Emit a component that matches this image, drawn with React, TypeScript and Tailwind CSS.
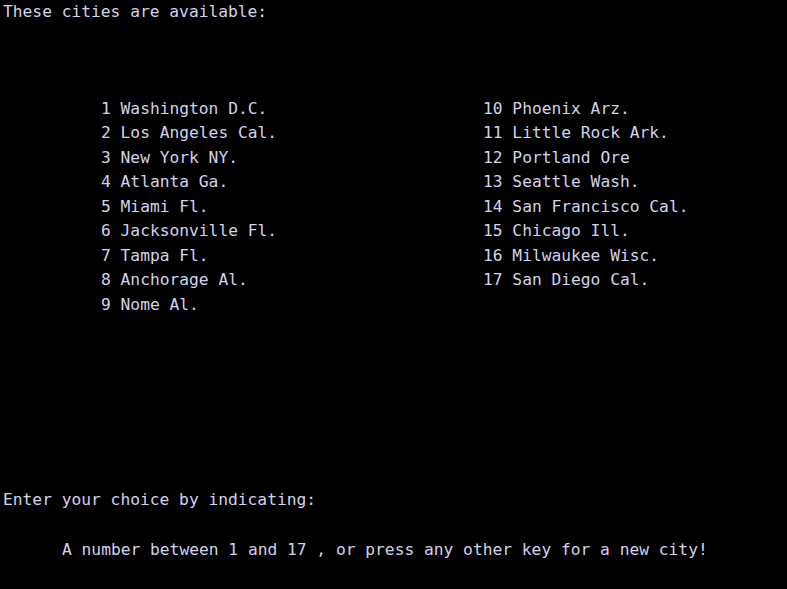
const left = [
  '1 Washington D.C.',
  '2 Los Angeles Cal.',
  '3 New York NY.',
  '4 Atlanta Ga.',
  '5 Miami Fl.',
  '6 Jacksonville Fl.',
  '7 Tampa Fl.',
  '8 Anchorage Al.',
  '9 Nome Al.',
];

const right = [
  '10 Phoenix Arz.',
  '11 Little Rock Ark.',
  '12 Portland Ore',
  '13 Seattle Wash.',
  '14 San Francisco Cal.',
  '15 Chicago Ill.',
  '16 Milwaukee Wisc.',
  '17 San Diego Cal.',
];

export default function App() {
  return (
    <div className="w-[787px] h-[589px] overflow-hidden bg-black text-[#d2d2ec] font-['DejaVu_Sans_Mono',monospace] text-[16.25px] leading-[24.5px] whitespace-pre pl-[3px]">
      <div>These cities are available:</div>

      {/* city list, two columns */}
      <div className="mt-[72px] pl-[98px] flex">
        <div className="w-[382px] flex flex-col">
          {left.map((c) => (
            <div key={c}>{c}</div>
          ))}
        </div>
        <div className="flex flex-col">
          {right.map((c) => (
            <div key={c}>{c}</div>
          ))}
        </div>
      </div>

      <div className="mt-[171px]">Enter your choice by indicating:</div>
      <div className="mt-[25.5px] pl-[59px]">
        A number between 1 and 17 , or press any other key for a new city!
      </div>
    </div>
  );
}
